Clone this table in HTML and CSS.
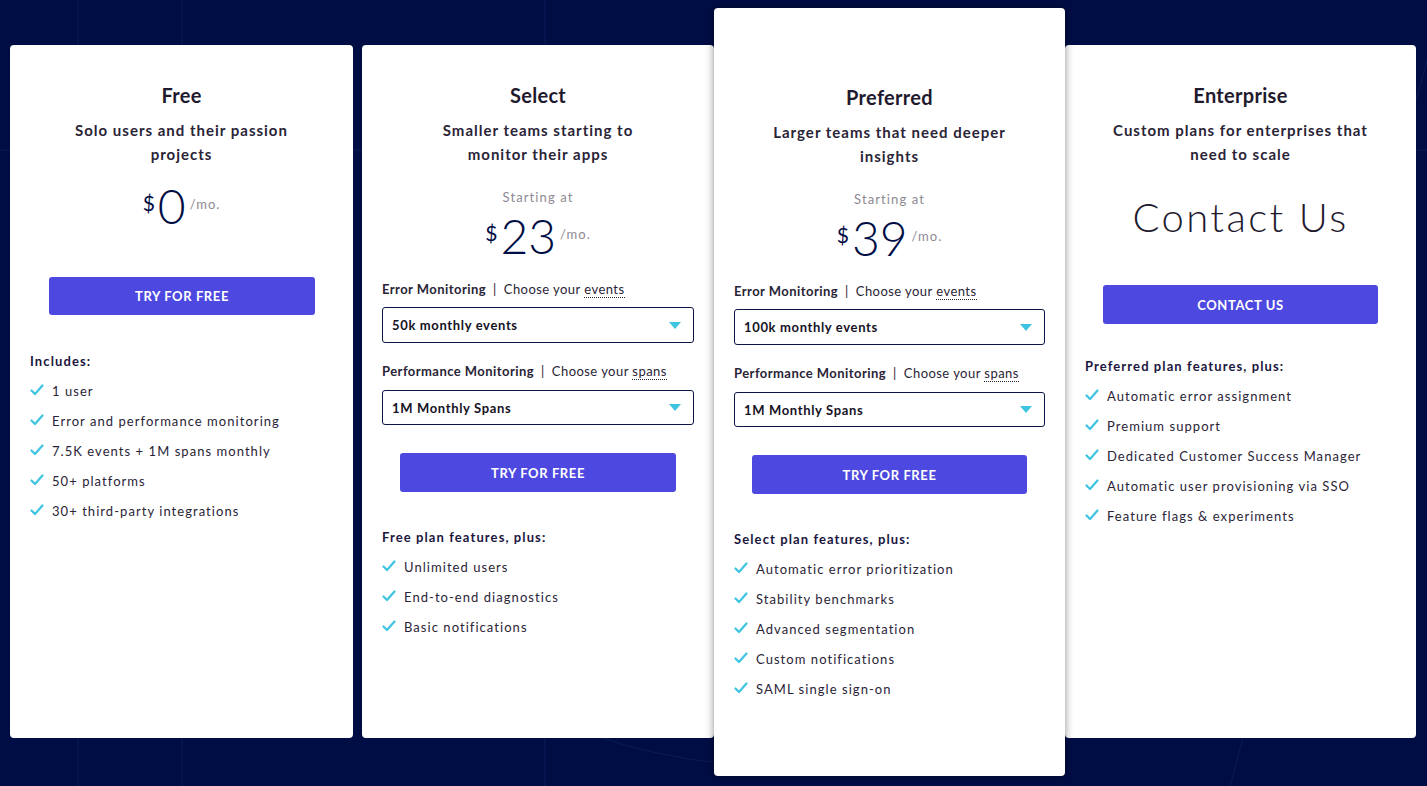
FILE: index.html
```html
<!DOCTYPE html>
<html lang="en">
<head>
<meta charset="utf-8">
<title>Pricing</title>
<link rel="stylesheet" href="styles.css">
</head>
<body>
<div class="page">
  <svg class="bg-lines" width="1427" height="786" viewBox="0 0 1427 786" aria-hidden="true">
    <path d="M78 0 V786 M182 0 V786 M545 0 V786 M0 150 H1427" stroke="#0a1a58" stroke-width="1" fill="none"/>
    <path d="M400 620 Q600 800 900 760" stroke="#0a1a58" stroke-width="1" fill="none"/>
    <path d="M1427 60 L1230 786" stroke="#0a1a58" stroke-width="1" fill="none"/>
  </svg>
  <div class="cards">
    <section class="card card-free">
      <h2 class="title">Free</h2>
      <p class="subtitle">Solo users and their passion<br>projects</p>
      <div class="price price-free"><span class="cur">$</span><span class="amount">0</span><span class="per">/mo.</span></div>
      <a class="btn btn-free">TRY FOR FREE</a>
      <h3 class="feat-head">Includes:</h3>
      <ul class="feats">
        <li><svg class="chk" viewBox="0 0 14 12"><path d="M1.5 6.5 L5 10 L12.5 1.5" /></svg>1 user</li>
        <li><svg class="chk" viewBox="0 0 14 12"><path d="M1.5 6.5 L5 10 L12.5 1.5" /></svg>Error and performance monitoring</li>
        <li><svg class="chk" viewBox="0 0 14 12"><path d="M1.5 6.5 L5 10 L12.5 1.5" /></svg>7.5K events + 1M spans monthly</li>
        <li><svg class="chk" viewBox="0 0 14 12"><path d="M1.5 6.5 L5 10 L12.5 1.5" /></svg>50+ platforms</li>
        <li><svg class="chk" viewBox="0 0 14 12"><path d="M1.5 6.5 L5 10 L12.5 1.5" /></svg>30+ third-party integrations</li>
      </ul>
    </section>

    <section class="card card-select">
      <h2 class="title">Select</h2>
      <p class="subtitle">Smaller teams starting to<br>monitor their apps</p>
      <p class="starting">Starting at</p>
      <div class="price"><span class="cur">$</span><span class="amount">23</span><span class="per">/mo.</span></div>
      <p class="field-label"><b>Error Monitoring</b><span class="sep">|</span>Choose your <span class="dotted">events</span></p>
      <div class="select"><span>50k monthly events</span><span class="tri"></span></div>
      <p class="field-label lbl2"><b>Performance Monitoring</b><span class="sep">|</span>Choose your <span class="dotted">spans</span></p>
      <div class="select sel2"><span>1M Monthly Spans</span><span class="tri"></span></div>
      <a class="btn btn-plan">TRY FOR FREE</a>
      <h3 class="feat-head">Free plan features, plus:</h3>
      <ul class="feats">
        <li><svg class="chk" viewBox="0 0 14 12"><path d="M1.5 6.5 L5 10 L12.5 1.5" /></svg>Unlimited users</li>
        <li><svg class="chk" viewBox="0 0 14 12"><path d="M1.5 6.5 L5 10 L12.5 1.5" /></svg>End-to-end diagnostics</li>
        <li><svg class="chk" viewBox="0 0 14 12"><path d="M1.5 6.5 L5 10 L12.5 1.5" /></svg>Basic notifications</li>
      </ul>
    </section>

    <section class="card card-preferred">
      <h2 class="title">Preferred</h2>
      <p class="subtitle">Larger teams that need deeper<br>insights</p>
      <p class="starting">Starting at</p>
      <div class="price"><span class="cur">$</span><span class="amount">39</span><span class="per">/mo.</span></div>
      <p class="field-label"><b>Error Monitoring</b><span class="sep">|</span>Choose your <span class="dotted">events</span></p>
      <div class="select"><span>100k monthly events</span><span class="tri"></span></div>
      <p class="field-label lbl2"><b>Performance Monitoring</b><span class="sep">|</span>Choose your <span class="dotted">spans</span></p>
      <div class="select sel2"><span>1M Monthly Spans</span><span class="tri"></span></div>
      <a class="btn btn-plan">TRY FOR FREE</a>
      <h3 class="feat-head">Select plan features, plus:</h3>
      <ul class="feats">
        <li><svg class="chk" viewBox="0 0 14 12"><path d="M1.5 6.5 L5 10 L12.5 1.5" /></svg>Automatic error prioritization</li>
        <li><svg class="chk" viewBox="0 0 14 12"><path d="M1.5 6.5 L5 10 L12.5 1.5" /></svg>Stability benchmarks</li>
        <li><svg class="chk" viewBox="0 0 14 12"><path d="M1.5 6.5 L5 10 L12.5 1.5" /></svg>Advanced segmentation</li>
        <li><svg class="chk" viewBox="0 0 14 12"><path d="M1.5 6.5 L5 10 L12.5 1.5" /></svg>Custom notifications</li>
        <li><svg class="chk" viewBox="0 0 14 12"><path d="M1.5 6.5 L5 10 L12.5 1.5" /></svg>SAML single sign-on</li>
      </ul>
    </section>

    <section class="card card-enterprise">
      <h2 class="title">Enterprise</h2>
      <p class="subtitle">Custom plans for enterprises that<br>need to scale</p>
      <p class="contact">Contact Us</p>
      <a class="btn btn-contact">CONTACT US</a>
      <h3 class="feat-head">Preferred plan features, plus:</h3>
      <ul class="feats">
        <li><svg class="chk" viewBox="0 0 14 12"><path d="M1.5 6.5 L5 10 L12.5 1.5" /></svg>Automatic error assignment</li>
        <li><svg class="chk" viewBox="0 0 14 12"><path d="M1.5 6.5 L5 10 L12.5 1.5" /></svg>Premium support</li>
        <li><svg class="chk" viewBox="0 0 14 12"><path d="M1.5 6.5 L5 10 L12.5 1.5" /></svg>Dedicated Customer Success Manager</li>
        <li><svg class="chk" viewBox="0 0 14 12"><path d="M1.5 6.5 L5 10 L12.5 1.5" /></svg>Automatic user provisioning via SSO</li>
        <li><svg class="chk" viewBox="0 0 14 12"><path d="M1.5 6.5 L5 10 L12.5 1.5" /></svg>Feature flags &amp; experiments</li>
      </ul>
    </section>
  </div>
</div>
</body>
</html>
```

FILE: styles.css
```css
* { box-sizing: border-box; }
html, body { margin: 0; padding: 0; }
body {
  background: #000d45;
  font-family: Lato, "Noto Sans", sans-serif;
  color: #1f1a2e;
}
.page {
  position: relative;
  width: 1427px;
  height: 786px;
  overflow: hidden;
}
.bg-lines {
  position: absolute;
  left: 0;
  top: 0;
}
.cards {
  position: relative;
  display: flex;
  align-items: flex-start;
  padding: 45px 0 0 10px;
}
.card {
  background: #fff;
  border-radius: 4px;
  height: 693px;
  padding: 38px 20px 0 20px;
  display: flex;
  flex-direction: column;
}
.card-free { width: 343px; margin-right: 9px; }
.card-select { width: 352px; }
.card-preferred {
  width: 351px;
  height: 768px;
  margin-top: -37px;
  padding-top: 77px;
  position: relative;
  z-index: 2;
  box-shadow: 0 0 8px rgba(0, 0, 0, 0.45);
}
.card-enterprise { width: 351px; }

.title {
  margin: 0;
  text-align: center;
  font-size: 20px;
  line-height: 24px;
  font-weight: 700;
  letter-spacing: 0.3px;
  color: #1f1a2e;
}
.subtitle {
  margin: 11px 0 0;
  text-align: center;
  font-size: 15px;
  line-height: 24px;
  font-weight: 700;
  letter-spacing: 1px;
  color: #2a2437;
}
.starting {
  margin: 21px 0 0;
  text-align: center;
  font-size: 13px;
  line-height: 20px;
  color: #8d8a93;
  letter-spacing: 1.1px;
}
.price {
  margin-top: 1px;
  display: flex;
  justify-content: center;
  align-items: flex-start;
  height: 56px;
  color: #000d45;
}
.price-free { margin-top: 12px; }
.cur {
  font-size: 21px;
  line-height: 24px;
  margin-top: 13px;
  margin-right: 3px;
  font-weight: 400;
}
.amount {
  font-size: 48px;
  line-height: 56px;
  font-weight: 300;
}
.per {
  font-size: 13px;
  line-height: 20px;
  margin-top: 16px;
  margin-left: 4px;
  color: #8d8a93;
  letter-spacing: 1px;
}
.field-label {
  margin: 15px 0 0;
  font-size: 13px;
  line-height: 20px;
  color: #2a2437;
  letter-spacing: 0.45px;
}
.field-label b { font-weight: 700; }
.field-label.lbl2 { margin-top: 18px; }
.sep { margin: 0 7px; color: #1f1a2e; }
.dotted { border-bottom: 1px dotted #2a2437; }
.select {
  margin-top: 8px;
  height: 36px;
  border: 1px solid #0b1547;
  border-radius: 3px;
  display: flex;
  align-items: center;
  justify-content: space-between;
  padding: 0 12px 0 9px;
  font-size: 13px;
  font-weight: 700;
  letter-spacing: 0.65px;
  color: #161225;
}
.select.sel2 { margin-top: 9px; height: 35px; }
.tri {
  width: 0;
  height: 0;
  border-left: 6px solid transparent;
  border-right: 6px solid transparent;
  border-top: 7px solid #3ec4e0;
}
.btn {
  display: flex;
  align-items: center;
  justify-content: center;
  margin: 0 18px;
  height: 38px;
  background: #4d49e0;
  border-radius: 3px;
  color: #fff;
  font-size: 13px;
  font-weight: 700;
  letter-spacing: 0.6px;
}
.btn-free { margin-top: 43px; margin-left: 19px; margin-right: 18px; }
.btn-plan { margin-top: 28px; height: 39px; }
.btn-contact { margin-top: 44px; height: 39px; }
.contact {
  margin: 27px 0 0;
  text-align: center;
  font-size: 40px;
  line-height: 48px;
  font-weight: 300;
  letter-spacing: 2.4px;
  color: #1f1a2e;
}
.feat-head {
  margin: 35px 0 0;
  font-size: 13px;
  line-height: 20px;
  font-weight: 700;
  letter-spacing: 1.1px;
  color: #1b1640;
}
.card-free .feat-head { margin-top: 36px; }
.card-enterprise .feat-head { margin-top: 32px; }
.feats {
  list-style: none;
  margin: 10px 0 0;
  padding: 0;
}
.feats li {
  display: flex;
  align-items: center;
  height: 20px;
  margin-bottom: 10px;
  font-size: 13px;
  letter-spacing: 1.05px;
  color: #2a2437;
}
.chk {
  width: 14px;
  height: 12px;
  margin-right: 8px;
  margin-top: -3px;
  fill: none;
  stroke: #3ec4e0;
  stroke-width: 2.2;
  stroke-linecap: round;
  stroke-linejoin: round;
}
```
